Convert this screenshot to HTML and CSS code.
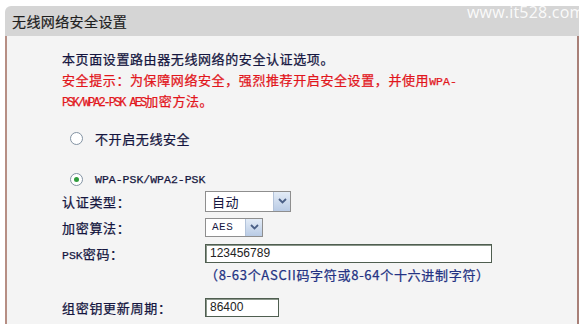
FILE: index.html
```html
<!DOCTYPE html>
<html lang="zh-CN">
<head>
    <meta charset="UTF-8">
    <title>无线网络安全设置</title>
    <link rel="stylesheet" href="styles.css">
</head>
<body>
    <div class="panel">
        <div class="panel-title">无线网络安全设置</div>
        <div class="panel-body">
            <p class="intro">本页面设置路由器无线网络的安全认证选项。</p>
            <p class="intro warn">安全提示：为保障网络安全，强烈推荐开启安全设置，并使用<span class="en">WPA-</span></p>
            <p class="intro warn"><span class="en tight">PSK/WPA2-PSK AES</span>加密方法。</p>

            <label class="radio-row first">
                <span class="radio"></span>不开启无线安全
            </label>
            <label class="radio-row">
                <span class="radio checked"></span><span class="en">WPA-PSK/WPA2-PSK</span>
            </label>

            <div class="form-row">
                <span class="label">认证类型：</span>
                <div class="select wide">
                    <span class="select-text">自动</span>
                    <span class="select-btn"><svg width="9" height="6" viewBox="0 0 9 6"><path d="M1 1 L4.5 4.5 L8 1" fill="none" stroke="#4a5f86" stroke-width="1.8"/></svg></span>
                </div>
            </div>
            <div class="form-row">
                <span class="label">加密算法：</span>
                <div class="select narrow">
                    <span class="select-text en small">AES</span>
                    <span class="select-btn"><svg width="9" height="6" viewBox="0 0 9 6"><path d="M1 1 L4.5 4.5 L8 1" fill="none" stroke="#4a5f86" stroke-width="1.8"/></svg></span>
                </div>
            </div>
            <div class="form-row">
                <span class="label"><span class="en">PSK</span>密码：</span>
                <div class="input psk">123456789</div>
            </div>
            <div class="hint">（8-63个ASCII码字符或8-64个十六进制字符）</div>
            <div class="form-row last">
                <span class="label">组密钥更新周期：</span>
                <div class="input period">86400</div>
            </div>
        </div>
    </div>
    <div class="watermark">www.it528.com</div>
</body>
</html>
```

FILE: styles.css
```css
body {
    margin: 0;
    background: #fff;
    font-family: "Noto Sans CJK SC", "Liberation Sans", sans-serif;
    font-size: 13px;
    color: #15163f;
    position: relative;
    height: 324px;
    overflow: hidden;
}
.panel {
    margin: 6px 0 0 5px;
    width: 574px;
}
.panel-title {
    height: 30px;
    line-height: 30px;
    background: #d5d5d5;
    border-top-left-radius: 6px;
    padding-left: 7px;
    font-size: 14px;
    color: #1e1e1e;
    letter-spacing: 0.4px;
    -webkit-text-stroke: 0.2px currentColor;
}
.panel-body {
    background: #f4f4f4;
    border-left: 2px solid #b68e84;
    border-right: 2px solid #a88078;
    padding: 12px 0 0 55px;
    height: 288px;
    box-sizing: border-box;
    -webkit-text-stroke: 0.25px currentColor;
}
.intro {
    margin: 0;
    height: 21px;
    line-height: 21px;
    letter-spacing: 0.6px;
}
.warn {
    color: #e2161c;
}
.en {
    font-family: "Liberation Mono", monospace;
    font-size: 11.5px;
    letter-spacing: 0;
}
.en.tight {
    font-size: 12px;
    letter-spacing: -2px;
}
.radio-row {
    display: flex;
    align-items: center;
    height: 22px;
    margin-top: 19px;
    padding-left: 8px;
    letter-spacing: 0.6px;
}
.radio-row.first {
    margin-top: 16px;
}
.radio {
    width: 11px;
    height: 11px;
    border: 1px solid #8393a3;
    border-radius: 50%;
    background: #fff;
    margin-right: 12px;
    position: relative;
    box-sizing: content-box;
}
.radio.checked::after {
    content: "";
    position: absolute;
    left: 3px;
    top: 3px;
    width: 5px;
    height: 5px;
    border-radius: 50%;
    background: #2f9c3c;
}
.form-row {
    display: flex;
    align-items: center;
    height: 26px;
}
.form-row:nth-of-type(1) {
    margin-top: -2px;
}
.form-row.last {
    margin-top: 11px;
}
.label {
    width: 143px;
    letter-spacing: 0.7px;
}
.select {
    display: flex;
    align-items: center;
    height: 19px;
    border: 1px solid #8e8e8e;
    background: #fff;
    box-sizing: border-box;
    -webkit-text-stroke: 0;
}
.select.wide {
    width: 86px;
    height: 21px;
}
.select.narrow {
    width: 58px;
}
.select-text {
    flex: 1;
    padding-left: 6px;
    letter-spacing: 0.5px;
}
.select-text.small {
    font-size: 11px;
}
.select-btn {
    width: 16px;
    height: 100%;
    display: flex;
    align-items: center;
    justify-content: center;
    background: linear-gradient(#e3ecf7, #b9cbe5);
    border-left: 1px solid #b3c3da;
}
.input {
    height: 19px;
    line-height: 17px;
    border: 1px solid #4f5e50;
    box-shadow: inset 1px 1px 0 #8a968a;
    background: #fff;
    padding-left: 4px;
    box-sizing: border-box;
    font-size: 12px;
    font-family: "Liberation Sans", sans-serif;
    -webkit-text-stroke: 0;
    color: #222;
}
.input.psk {
    width: 287px;
}
.input.period {
    width: 74px;
}
.hint {
    margin-left: 143px;
    height: 17px;
    line-height: 17px;
    color: #233283;
    font-size: 13px;
    letter-spacing: 0.7px;
}
.watermark {
    position: absolute;
    left: 467px;
    top: 1px;
    font-family: "Open Sans", sans-serif;
    font-size: 16px;
    color: rgba(255, 255, 255, 0.9);
    letter-spacing: 0.2px;
}
```
